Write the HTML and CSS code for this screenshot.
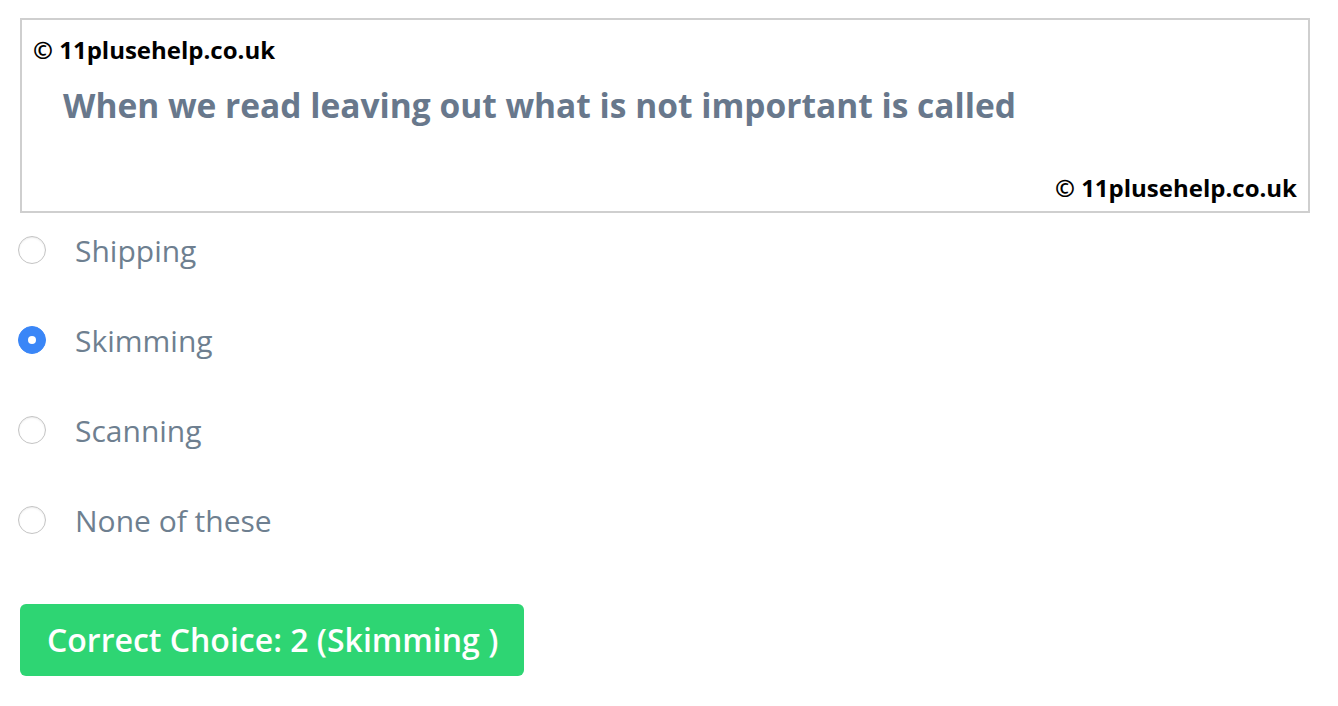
FILE: index.html
```html
<!DOCTYPE html>
<html lang="en">
<head>
<meta charset="utf-8">
<title>Question</title>
<link rel="stylesheet" href="styles.css">
</head>
<body>
<div class="page">
  <div class="question-box">
    <div class="copy copy-top">© 11plusehelp.co.uk</div>
    <div class="question">When we read leaving out what is not important is called</div>
    <div class="copy copy-bottom">© 11plusehelp.co.uk</div>
  </div>
  <ul class="options">
    <li class="option"><span class="radio"></span><span class="label">Shipping</span></li>
    <li class="option"><span class="radio checked"></span><span class="label">Skimming</span></li>
    <li class="option"><span class="radio"></span><span class="label">Scanning</span></li>
    <li class="option"><span class="radio"></span><span class="label">None of these</span></li>
  </ul>
  <div class="answer">Correct Choice: 2 (Skimming )</div>
</div>
</body>
</html>
```

FILE: styles.css
```css
html, body {
  margin: 0;
  padding: 0;
  background: #ffffff;
}
body {
  font-family: "Open Sans", "Noto Sans", sans-serif;
}
.page {
  padding: 18px 28px 0 20px;
}
.question-box {
  border: 2px solid #cfcfcf;
  padding: 14px 11px 7px 11px;
  display: flex;
  flex-direction: column;
}
.copy {
  font-weight: 700;
  font-size: 24px;
  line-height: 32px;
  color: #000;
}
.copy-bottom {
  align-self: flex-end;
}
.question {
  font-weight: 700;
  font-size: 33.5px;
  line-height: 44px;
  color: #68788c;
  margin: 17px 0 45px 30px;
}
.options {
  list-style: none;
  margin: 0;
  padding: 0;
  display: flex;
  flex-direction: column;
  gap: 16px;
}
.option {
  display: flex;
  align-items: center;
  height: 74px;
  gap: 29px;
}
.radio {
  width: 26px;
  height: 26px;
  border-radius: 50%;
  border: 1px solid #c4c4c4;
  box-shadow: inset 0 1px 2px rgba(0,0,0,0.08);
  background: #fff;
  box-sizing: content-box;
  display: flex;
  align-items: center;
  justify-content: center;
  margin-left: -2px;
}
.radio.checked {
  background: #3a86f7;
  border-color: #3a86f7;
  box-shadow: none;
}
.radio.checked::after {
  content: "";
  width: 8px;
  height: 8px;
  border-radius: 50%;
  background: #fff;
}
.label {
  font-size: 30px;
  color: #6e7f90;
}
.answer {
  display: inline-block;
  margin-top: 47px;
  background: #2ed573;
  color: #fff;
  font-weight: 600;
  font-size: 32px;
  line-height: 72px;
  padding: 0 26px 0 27px;
  border-radius: 6px;
}
```
